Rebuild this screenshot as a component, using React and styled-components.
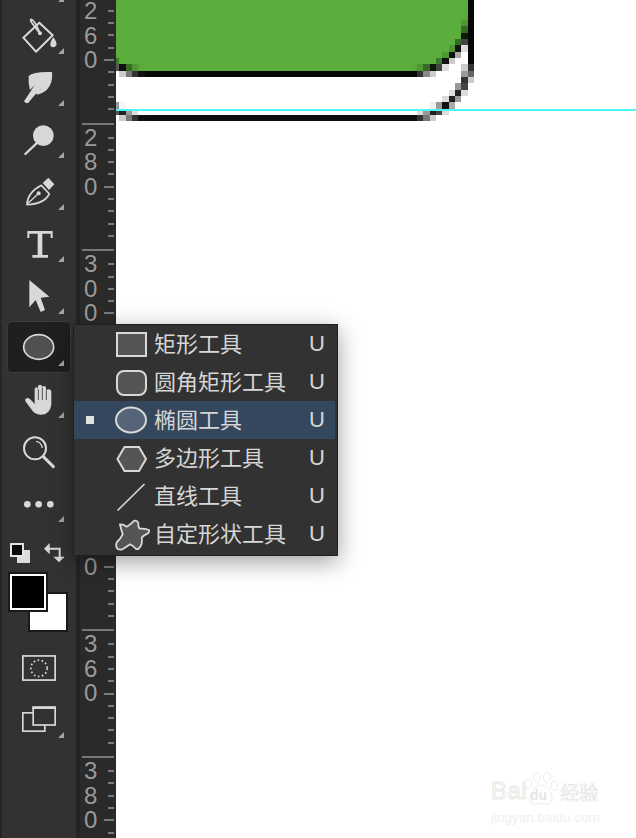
import React from 'react';
import styled, { createGlobalStyle } from 'styled-components';

const GlobalStyle = createGlobalStyle`
  html, body {
    margin: 0;
    padding: 0;
    background: #fff;
    overflow: hidden;
  }
`;

const ICON = '#d8d8d8';

// canvas pixels, in 1/3 px units read off the enlarged reference: [x, y, color]
const PIXELS = [
  [48, 174, '#3c7a2c', 10], [48, 193, '#555'], [58, 193, '#111'], [77, 193, '#356b26'], [96, 193, '#4f9636'], [115, 193, '#58a83a'],
  [932, 193, '#58a83a'], [951, 193, '#4f9636'], [970, 193, '#356b26'], [989, 193, '#0d1a08'], [1008, 193, '#444'], [1027, 193, '#ddd'],
  [1008, 174, '#3a7a2a'], [1027, 174, '#111'], [1046, 174, '#ccc'],
  [1027, 155, '#4a9a33'], [1046, 155, '#111'], [1065, 155, '#aaa'],
  [1046, 136, '#4f9636'], [1065, 136, '#111'], [1084, 136, '#ddd'],
  [1065, 117, '#356b26'], [1084, 117, '#444'],
  [1084, 98, '#0d1a08'], [1084, 79, '#356b26'], [1084, 60, '#4f9636'], [1084, 41, '#58a83a'],
  [58, 212, '#ccc'], [77, 212, '#777'], [96, 212, '#333'], [115, 212, '#111'],
  [951, 212, '#333'], [970, 212, '#888'], [989, 212, '#ccc'],
  [1084, 193, '#ccc'], [1103, 193, '#333'], [1084, 212, '#999'], [1103, 212, '#666'], [1084, 231, '#333'], [1103, 231, '#ccc'],
  [1065, 250, '#999'], [1084, 250, '#444'], [1046, 269, '#ddd'], [1065, 269, '#222'], [1084, 269, '#ddd'],
  [1027, 288, '#ddd'], [1046, 288, '#222'], [1065, 288, '#999'], [989, 307, '#eee'], [1008, 307, '#999'], [1027, 307, '#111'], [1046, 307, '#aaa'],
  [951, 326, '#ddd'], [970, 326, '#999'], [989, 326, '#222'], [1008, 326, '#444'], [1027, 326, '#ddd'],
  [48, 307, '#999', 10], [58, 307, '#f5f5f5'], [48, 326, '#555', 10], [58, 326, '#222'], [77, 326, '#999'], [96, 326, '#ddd'],
  [58, 345, '#ccc'], [77, 345, '#777'], [96, 345, '#333'], [115, 345, '#111'],
  [951, 345, '#333'], [970, 345, '#777'], [989, 345, '#ccc'],
];

function ShapeDrawing() {
  return (
    <ShapeSvg viewBox="48 0 1152 390" shapeRendering="crispEdges">
      <path d="M1084 0V41H1084V117H1065V136H1046V155H1027V174H1008V193H48V0Z" fill="#5cae3c" />
      <rect x="1084" y="0" width="19" height="41" fill="#5cae3c" />
      <rect x="134" y="193" width="798" height="19" fill="#5cae3c" />
      <rect x="134" y="212" width="817" height="19" fill="#060a04" />
      <rect x="134" y="345" width="817" height="18" fill="#0e0e0e" />
      <rect x="1103" y="0" width="19" height="193" fill="#060606" />
      {PIXELS.map(([x, y, color, w = 19]) => (
        <rect key={`${x}-${y}`} x={x} y={y} width={w} height="19" fill={color} />
      ))}
    </ShapeSvg>
  );
}

function ToolIcon({ y, children }) {
  return <IconSvg viewBox={`51 ${y} 132 132`}>{children}</IconSvg>;
}

const TOOLS = [
  {
    name: 'blank',
    corner: true,
    icon: null,
  },
  {
    name: 'bucket',
    corner: true,
    icon: (
      <ToolIcon y={39}>
        <path d="M70 113L118 68L158 106L108 155Z" fill="none" stroke={ICON} strokeWidth="6" strokeLinejoin="round" />
        <path d="M118 98L98 72Q88 58 94 58Q104 60 120 100" fill="none" stroke={ICON} strokeWidth="5" />
        <circle cx="120" cy="100" r="6" fill={ICON} />
        <path d="M160 112Q174 130 168 137Q160 146 152 138Q147 130 160 112Z" fill={ICON} />
      </ToolIcon>
    ),
  },
  {
    name: 'smudge',
    corner: true,
    icon: (
      <ToolIcon y={195}>
        <path d="M86 228Q100 214 156 216Q160 250 140 270Q126 282 112 284L108 278Q120 272 126 262L100 290L84 310Q74 310 72 304L96 268L104 256L90 270Q84 250 86 228Z" fill={ICON} />
      </ToolIcon>
    ),
  },
  {
    name: 'dodge',
    corner: true,
    icon: (
      <ToolIcon y={351}>
        <circle cx="130" cy="407" r="31" fill={ICON} />
        <path d="M76 462L112 428" stroke={ICON} strokeWidth="7" strokeLinecap="round" />
      </ToolIcon>
    ),
  },
  {
    name: 'pen',
    corner: true,
    icon: (
      <ToolIcon y={507}>
        <path d="M81 614Q82 578 124 556L148 582Q132 612 81 614Z" fill="none" stroke={ICON} strokeWidth="5" strokeLinejoin="round" />
        <path d="M84 610L114 582" stroke={ICON} strokeWidth="4" />
        <circle cx="116" cy="580" r="6" fill={ICON} />
        <path d="M128 549L145 533L163 553L147 570Z" fill={ICON} />
      </ToolIcon>
    ),
  },
  {
    name: 'type',
    corner: true,
    icon: (
      <ToolIcon y={663}>
        <path d="M82 693H158V714H152V701H127V765H144V773H97V765H113V701H88V714H82Z" fill={ICON} />
      </ToolIcon>
    ),
  },
  {
    name: 'arrow',
    corner: true,
    icon: (
      <ToolIcon y={819}>
        <path d="M88 840L148 890L122 893L135 930L122 936L107 900L88 922Z" fill={ICON} />
      </ToolIcon>
    ),
  },
  {
    name: 'ellipse',
    corner: true,
    selected: true,
    icon: (
      <ToolIcon y={15}>
        <ellipse cx="116" cy="81" rx="45" ry="37" fill="#505050" stroke={ICON} strokeWidth="5" />
      </ToolIcon>
    ),
  },
  {
    name: 'hand',
    corner: true,
    icon: (
      <ToolIcon y={171}>
        <path
          d="M104 236V208Q104 202 109 202Q114 202 114 208V200Q114 194 120 194Q126 194 126 200V204Q126 198 132 198Q138 198 138 204V214Q138 208 146 208Q154 208 154 216L154 254Q150 284 122 284Q104 284 94 268L76 244Q74 234 84 234Q90 236 104 252Z"
          fill={ICON}
        />
        <path d="M115 208V240M127 204V240M139 212V240" stroke="#323232" strokeWidth="2.5" />
      </ToolIcon>
    ),
  },
  {
    name: 'zoom',
    corner: false,
    icon: (
      <ToolIcon y={327}>
        <circle cx="105" cy="385" r="33" fill="none" stroke={ICON} strokeWidth="6" />
        <path d="M108 364Q124 366 127 384" fill="none" stroke={ICON} strokeWidth="4" />
        <path d="M130 410L160 440" stroke={ICON} strokeWidth="9" strokeLinecap="round" />
      </ToolIcon>
    ),
  },
  {
    name: 'more',
    corner: true,
    icon: (
      <ToolIcon y={483}>
        <circle cx="82" cy="553" r="10" fill={ICON} />
        <circle cx="116" cy="553" r="10" fill={ICON} />
        <circle cx="151" cy="553" r="10" fill={ICON} />
      </ToolIcon>
    ),
  },
];

const RULER_SECTIONS = ['260', '280', '300', '320', '340', '360', '380'];
const TICK_INDEXES = [0, 1, 2, 3, 4, 5, 6, 7, 8, 9];

const SHAPE_ITEMS = [
  {
    label: '矩形工具',
    icon: <rect x="3" y="8" width="29" height="23" fill="#555" stroke={ICON} strokeWidth="2" />,
  },
  {
    label: '圆角矩形工具',
    icon: <rect x="3" y="8" width="29" height="24" rx="7" fill="#555" stroke={ICON} strokeWidth="2" />,
  },
  {
    label: '椭圆工具',
    active: true,
    icon: <ellipse cx="17" cy="19" rx="15" ry="12.5" fill="#566479" stroke={ICON} strokeWidth="2" />,
  },
  {
    label: '多边形工具',
    icon: <path d="M3.5 20L10.5 8H25L32 20L25 32H10.5Z" fill="#555" stroke={ICON} strokeWidth="2" />,
  },
  {
    label: '直线工具',
    icon: <path d="M3.5 33.5L30.5 7" stroke={ICON} strokeWidth="1.6" fill="none" />,
  },
  {
    label: '自定形状工具',
    icon: (
      <path
        d="M6 9.5Q9 9 12.7 11.7Q16 10 20 5.9Q23 5 24.3 7.7Q24 12 25.5 13.7Q31 13.5 35 15Q35.5 17 34 18.3Q30 20 27.7 22.7Q28.5 28 26.7 31Q24.5 35 22 34Q19 30 16 29.3Q11 33 7.7 34.6Q3.5 35 2.7 32.5Q1.5 29 3 27Q7 23 8.7 19.3Q7 14 6 9.5Z"
        fill="#555"
        stroke={ICON}
        strokeWidth="1.8"
      />
    ),
  },
];

function Ruler() {
  return (
    <RulerColumn>
      {RULER_SECTIONS.map((label) => (
        <RulerSection key={label}>
          <Digits>
            {label.split('').map((digit, i) => (
              <Digit key={i}>{digit}</Digit>
            ))}
          </Digits>
          <Ticks>
            {TICK_INDEXES.map((i) => (
              <TickCell key={i}>
                {i < 9 && <Tick $long={i === 4} />}
              </TickCell>
            ))}
          </Ticks>
        </RulerSection>
      ))}
    </RulerColumn>
  );
}

function Toolbar() {
  return (
    <ToolColumn>
      {TOOLS.map((tool) => (
        <ToolCell key={tool.name} $selected={tool.selected} $corner={tool.corner}>
          {tool.icon}
        </ToolCell>
      ))}
      <MiniRow>
        <MiniSwatches>
          <MiniBack />
          <MiniFront />
        </MiniSwatches>
        <SwapSvg viewBox="0 0 60 60">
          <path d="M14 17H47V44" fill="none" stroke={ICON} strokeWidth="6" />
          <path d="M0 17L17 0V34Z" fill={ICON} />
          <path d="M28 41H62L45 58Z" fill={ICON} />
        </SwapSvg>
      </MiniRow>
      <ColorStack>
        <BackColor />
        <FrontColor />
      </ColorStack>
      <MaskSvg viewBox="0 0 100 76">
        <rect x="2.5" y="2.5" width="95" height="71" fill="none" stroke={ICON} strokeWidth="5" />
        <circle cx="50" cy="39" r="24" fill="none" stroke={ICON} strokeWidth="5" strokeDasharray="5 7" />
      </MaskSvg>
      <ScreenCell>
        <ScreenSvg viewBox="0 0 102 78">
          <rect x="2.5" y="20.5" width="66" height="55" fill="none" stroke={ICON} strokeWidth="5" />
          <rect x="33.5" y="4" width="66" height="53" fill="#323232" stroke={ICON} strokeWidth="5" />
          <rect x="31" y="1" width="71" height="8" fill={ICON} />
        </ScreenSvg>
      </ScreenCell>
    </ToolColumn>
  );
}

function ShapeMenu() {
  return (
    <Menu>
      {SHAPE_ITEMS.map((item) => (
        <MenuRow key={item.label} $active={item.active}>
          <BulletSlot>{item.active && <Bullet />}</BulletSlot>
          <MenuIcon viewBox="0 0 36 38">{item.icon}</MenuIcon>
          <MenuLabel>{item.label}</MenuLabel>
          <Shortcut>U</Shortcut>
        </MenuRow>
      ))}
    </Menu>
  );
}

function Watermark() {
  return (
    <Mark>
      <MarkTop>
        <MarkLatin>Bai</MarkLatin>
        <PawSvg viewBox="0 0 40 38">
          <g fill="#fff" stroke="#e8e8e8" strokeWidth="1">
            <ellipse cx="6" cy="13" rx="3.5" ry="5" />
            <ellipse cx="15" cy="6" rx="3.8" ry="5.4" />
            <ellipse cx="26" cy="6" rx="3.8" ry="5.4" />
            <ellipse cx="34" cy="15" rx="3.5" ry="5" />
            <path d="M20 14Q27 14 31 25Q33 35 26 35Q20 33 14 35Q6 35 8 26Q12 15 20 14Z" />
          </g>
        </PawSvg>
        <MarkDu>du</MarkDu>
        <MarkCjk>经验</MarkCjk>
      </MarkTop>
      <MarkUrl>jingyan.baidu.com</MarkUrl>
    </Mark>
  );
}

function App() {
  return (
    <Page>
      <GlobalStyle />
      <Toolbar />
      <Ruler />
      <Canvas>
        <ShapeDrawing />
        <Guide />
        <Watermark />
      </Canvas>
      <ShapeMenu />
    </Page>
  );
}

const Page = styled.div`
  position: relative;
  display: flex;
  width: 636px;
  height: 838px;
  overflow: hidden;
  background: #fff;
`;

const ToolColumn = styled.div`
  width: 74px;
  flex: none;
  height: 838px;
  box-sizing: content-box;
  border-left: 2px solid #262626;
  background: #323232;
  display: flex;
  flex-direction: column;
  align-items: stretch;
`;

const ToolCell = styled.div`
  position: relative;
  box-sizing: border-box;
  flex: none;
  width: 64px;
  height: 52px;
  margin-left: 5px;
  display: flex;
  align-items: center;
  justify-content: center;
  border-radius: 5px;
  background: ${(p) => (p.$selected ? '#1f1f1f' : 'transparent')};
  box-shadow: ${(p) => (p.$selected ? 'inset 0 0 0 1px #3d3d3d' : 'none')};

  &:first-child {
    margin-top: -43px;
  }

  &::after {
    content: '';
    display: ${(p) => (p.$corner ? 'block' : 'none')};
    position: absolute;
    right: 7px;
    bottom: 7px;
    width: 6px;
    height: 6px;
    background: #a6a6a6;
    clip-path: polygon(100% 0, 100% 100%, 0 100%);
  }
`;

const IconSvg = styled.svg`
  width: 44px;
  height: 44px;
  display: block;
`;

const MiniRow = styled.div`
  margin: 14px 0 0 8px;
  height: 20px;
  display: flex;
  align-items: flex-start;
`;

const MiniSwatches = styled.div`
  position: relative;
  width: 20px;
  height: 20px;
`;

const MiniBack = styled.div`
  position: absolute;
  left: 7px;
  top: 7px;
  width: 13px;
  height: 13px;
  background: #dcdcdc;
`;

const MiniFront = styled.div`
  position: absolute;
  left: 0;
  top: 0;
  box-sizing: border-box;
  width: 14px;
  height: 14px;
  background: #0a0a0a;
  border: 2px solid #e4e4e4;
`;

const SwapSvg = styled.svg`
  width: 20px;
  height: 20px;
  margin: 0 0 0 14px;
  display: block;
`;

const ColorStack = styled.div`
  position: relative;
  margin: 9px 0 0 6px;
  width: 60px;
  height: 60px;
  flex: none;
`;

const BackColor = styled.div`
  position: absolute;
  left: 20px;
  top: 20px;
  box-sizing: border-box;
  width: 40px;
  height: 40px;
  background: #fff;
  border: 2px solid #1a1a1a;
`;

const FrontColor = styled.div`
  position: absolute;
  left: 0;
  top: 0;
  box-sizing: border-box;
  width: 40px;
  height: 40px;
  background: #000;
  border: 2px solid #1a1a1a;
  box-shadow: inset 0 0 0 2px #fff;
`;

const MaskSvg = styled.svg`
  display: block;
  flex: none;
  width: 34px;
  height: 26px;
  margin: 23px 0 0 20px;
`;

const ScreenCell = styled.div`
  position: relative;
  flex: none;
  width: 44px;
  height: 26px;
  margin: 25px 0 0 20px;

  &::after {
    content: '';
    position: absolute;
    left: 36px;
    bottom: -6px;
    width: 6px;
    height: 6px;
    background: #a6a6a6;
    clip-path: polygon(100% 0, 100% 100%, 0 100%);
  }
`;

const ScreenSvg = styled.svg`
  display: block;
  width: 34px;
  height: 26px;
`;

const RulerColumn = styled.div`
  flex: none;
  box-sizing: border-box;
  width: 40px;
  height: 838px;
  padding-left: 2px;
  border-left: 4px solid #242424;
  background: #2a2a2a;
  display: flex;
  flex-direction: column;
`;

const RulerSection = styled.div`
  flex: none;
  box-sizing: border-box;
  height: 126.7px;
  width: 32px;
  border-top: 2px solid #777;
  display: flex;
  justify-content: space-between;

  &:first-child {
    margin-top: -4px;
  }
`;

const Digits = styled.div`
  padding: 1px 0 0 2px;
  font-family: "Liberation Sans", Arial, sans-serif;
  font-size: 24px;
  line-height: 24.5px;
  color: #9a9a9a;
`;

const Digit = styled.div`
  height: 24.5px;
`;

const Ticks = styled.div`
  width: 10px;
  margin-top: 1.5px;
  display: flex;
  flex-direction: column;
`;

const TickCell = styled.div`
  flex: 1;
  display: flex;
  align-items: flex-end;
  justify-content: flex-end;
`;

const Tick = styled.div`
  width: ${(p) => (p.$long ? '10px' : '6px')};
  height: 2px;
  background: #7a7a7a;
`;

const Canvas = styled.div`
  position: relative;
  flex: 1;
  min-width: 0;
  background: #fff;
`;

const ShapeSvg = styled.svg`
  display: block;
  width: 384px;
  height: 130px;
`;

const Guide = styled.div`
  position: absolute;
  left: 0;
  right: 0;
  top: 109px;
  height: 2px;
  background: #4ef7f7;
`;

const Menu = styled.div`
  position: absolute;
  left: 73px;
  top: 324px;
  box-sizing: border-box;
  width: 265px;
  height: 232px;
  padding: 0 2px 0 0;
  background: #323232;
  border: 1px solid #1f1f1f;
  box-shadow: 0 6px 22px rgba(0, 0, 0, 0.38);
`;

const MenuRow = styled.div`
  height: 38px;
  display: flex;
  align-items: center;
  background: ${(p) => (p.$active ? '#34475d' : 'transparent')};
`;

const BulletSlot = styled.div`
  width: 40px;
  flex: none;
  display: flex;
  justify-content: center;
  padding-right: 8px;
  box-sizing: border-box;
`;

const Bullet = styled.div`
  width: 8px;
  height: 8px;
  background: #e2e2e2;
`;

const MenuIcon = styled.svg`
  display: block;
  flex: none;
  width: 36px;
  height: 38px;
`;

const MenuLabel = styled.span`
  margin: 0 0 4px 4px;
  flex: 1;
  font-family: "Noto Sans CJK SC", "Liberation Sans", sans-serif;
  font-size: 22px;
  line-height: 34px;
  color: #d6d6d6;
`;

const Shortcut = styled.span`
  width: 26px;
  flex: none;
  font-family: "Liberation Sans", Arial, sans-serif;
  font-size: 22px;
  line-height: 38px;
  color: #d6d6d6;
`;

const Mark = styled.div`
  position: absolute;
  left: 375px;
  top: 768px;
  width: 120px;
`;

const MarkTop = styled.div`
  position: relative;
  height: 40px;
  display: flex;
  align-items: flex-end;
`;

const MarkLatin = styled.span`
  font-family: "Liberation Sans", Arial, sans-serif;
  font-size: 24px;
  line-height: 34px;
  letter-spacing: 0.5px;
  color: #fff;
  -webkit-text-stroke: 1px #e8e8e8;
`;

const PawSvg = styled.svg`
  display: block;
  width: 37px;
  height: 37px;
  margin-left: -4px;
`;

const MarkDu = styled.span`
  position: absolute;
  left: 39px;
  top: 19px;
  font-family: "Liberation Sans", Arial, sans-serif;
  font-size: 14px;
  font-weight: 700;
  color: #e6e6e6;
`;

const MarkCjk = styled.span`
  font-family: "Noto Sans CJK SC", sans-serif;
  font-size: 19px;
  line-height: 32px;
  color: #fff;
  -webkit-text-stroke: 0.7px #e4e4e4;
`;

const MarkUrl = styled.div`
  margin-top: 2px;
  font-family: "Liberation Sans", Arial, sans-serif;
  font-size: 13.5px;
  line-height: 16px;
  color: #efefef;
  white-space: nowrap;
`;

export default App;
